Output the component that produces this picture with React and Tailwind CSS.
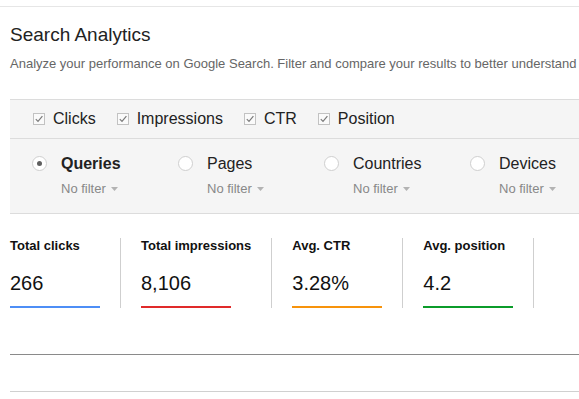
import React from 'react';

const metrics = ['Clicks', 'Impressions', 'CTR', 'Position'];

const groups = [
  { name: 'Queries', selected: true },
  { name: 'Pages' },
  { name: 'Countries' },
  { name: 'Devices' },
];

const stats = [
  { label: 'Total clicks', value: '266', bar: 'bg-[#4d8ef6]' },
  { label: 'Total impressions', value: '8,106', bar: 'bg-[#e02a2a]' },
  { label: 'Avg. CTR', value: '3.28%', bar: 'bg-[#f7930c]' },
  { label: 'Avg. position', value: '4.2', bar: 'bg-[#0b9c2a]' },
];

function CheckBox() {
  return (
    <svg width="12" height="12" viewBox="0 0 12 12" className="shrink-0">
      <rect x="0.5" y="0.5" width="11" height="11" fill="#fafafa" stroke="#c2c2c2" />
      <path d="M2.8 6.2 L5 8.4 L9.4 3.2" fill="none" stroke="#7a7a7a" strokeWidth="1.2" />
    </svg>
  );
}

function Radio({ selected }) {
  return (
    <span className="w-[15px] h-[15px] shrink-0 rounded-full border border-[#cfcfcf] bg-white flex items-center justify-center">
      {selected && <span className="w-[5px] h-[5px] rounded-full bg-[#5f5f5f]" />}
    </span>
  );
}

export default function App() {
  return (
    <div
      className="w-[579px] h-[399px] overflow-hidden bg-white text-[#222]"
      style={{ fontFamily: '"Liberation Sans", Arial, sans-serif' }}
    >
      <div className="pt-[6px]">
        <div className="border-t border-[#e6e6e6]" />
      </div>

      <div className="pl-[10px]">
        {/* Header */}
        <h1 className="mt-[16px] text-[19px] leading-[24px] text-[#222] whitespace-nowrap">Search Analytics</h1>
        <p className="mt-[9px] text-[13px] leading-[16px] text-[#666] whitespace-nowrap">
          Analyze your performance on Google Search. Filter and compare your results to better understand
        </p>

        {/* Filter panel */}
        <div className="mt-[27px] w-[600px] bg-[#f5f5f5] border-t border-b border-[#dcdcdc]">
          <div className="h-[39px] pl-[23px] flex items-center gap-[21px] border-b border-[#dcdcdc]">
            {metrics.map(m => (
              <label key={m} className="flex items-center gap-[8px] text-[16px] leading-[20px] text-[#222]">
                <CheckBox />
                {m}
              </label>
            ))}
          </div>
          <div className="pl-[22px] pt-[15px] pb-[16px] grid grid-cols-[146px_146px_146px_146px]">
            {groups.map(g => (
              <div key={g.name} className="flex gap-[14px]">
                <div className="pt-[2px]">
                  <Radio selected={g.selected} />
                </div>
                <div>
                  <div className={`text-[16px] leading-[20px] ${g.selected ? 'font-bold' : ''}`}>{g.name}</div>
                  <div className="mt-[7px] flex items-center gap-[5px] text-[13px] leading-[16px] text-[#888]">
                    No filter
                    <svg width="7" height="4" viewBox="0 0 7 4"><path d="M0 0 H7 L3.5 4 Z" fill="#b3b3b3" /></svg>
                  </div>
                </div>
              </div>
            ))}
          </div>
        </div>

        {/* Totals */}
        <div className="mt-[24px] flex">
          {stats.map((s, i) => (
            <div key={s.label} className={`border-r border-[#cfcfcf] pr-[20px] ${i === 0 ? '' : 'pl-[20px]'}`}>
              <div className="min-w-[90px]">
                <div className="text-[13px] leading-[16px] font-bold text-[#111] whitespace-nowrap">{s.label}</div>
                <div className="mt-[17px] text-[20px] leading-[24px] text-[#111]">{s.value}</div>
                <div className={`mt-[11px] w-[90px] h-[2px] ${s.bar}`} />
              </div>
            </div>
          ))}
        </div>

        <div className="mt-[46px] border-t border-[#8a8a8a]" />
        <div className="mt-[36px] border-t border-[#d0d0d0]" />
      </div>
    </div>
  );
}
